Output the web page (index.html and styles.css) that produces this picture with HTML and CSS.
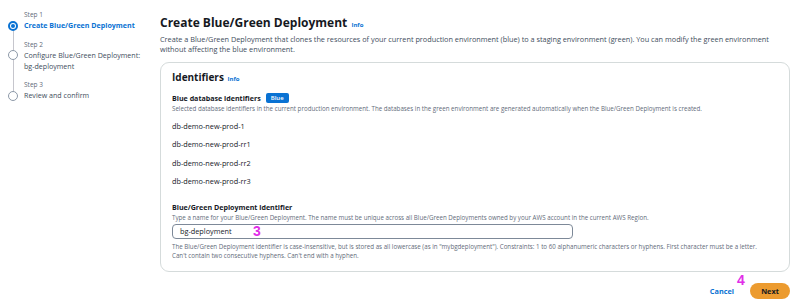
FILE: index.html
```html
<!DOCTYPE html>
<html>
<head>
<meta charset="utf-8">
<link rel="stylesheet" href="styles.css">
</head>
<body>
<div class="page">
  <nav class="steps">
    <div class="step">
      <div class="step-label">Step 1</div>
      <div class="step-row">
        <span class="radio active"></span>
        <span class="step-title current">Create Blue/Green Deployment</span>
      </div>
    </div>
    <div class="step">
      <div class="step-label">Step 2</div>
      <div class="step-row">
        <span class="radio"></span>
        <span class="step-title">Configure Blue/Green Deployment:<br>bg-deployment</span>
      </div>
    </div>
    <div class="step">
      <div class="step-label">Step 3</div>
      <div class="step-row">
        <span class="radio"></span>
        <span class="step-title">Review and confirm</span>
      </div>
    </div>
    <div class="rail"></div>
  </nav>
  <main class="main">
    <h1 class="title">Create Blue/Green Deployment <a class="info">Info</a></h1>
    <p class="lead">Create a Blue/Green Deployment that clones the resources of your current production environment (blue) to a staging environment (green). You can modify the green environment without affecting the blue environment.</p>
    <section class="card">
      <h2 class="card-title">Identifiers <a class="info">Info</a></h2>
      <div class="field-label">Blue database identifiers <span class="badge">Blue</span></div>
      <div class="field-desc">Selected database identifiers in the current production environment. The databases in the green environment are generated automatically when the Blue/Green Deployment is created.</div>
      <ul class="db-list">
        <li>db-demo-new-prod-1</li>
        <li>db-demo-new-prod-rr1</li>
        <li>db-demo-new-prod-rr2</li>
        <li>db-demo-new-prod-rr3</li>
      </ul>
      <div class="field-label spaced">Blue/Green Deployment identifier</div>
      <div class="field-desc">Type a name for your Blue/Green Deployment. The name must be unique across all Blue/Green Deployments owned by your AWS account in the current AWS Region.</div>
      <div class="input-wrap">
        <div class="input">bg-deployment</div>
        <span class="marker m3">3</span>
      </div>
      <div class="field-desc after">The Blue/Green Deployment identifier is case-insensitive, but is stored as all lowercase (as in "mybgdeployment"). Constraints: 1 to 60 alphanumeric characters or hyphens. First character must be a letter.<br>Can't contain two consecutive hyphens. Can't end with a hyphen.</div>
    </section>
    <div class="actions">
      <a class="cancel">Cancel</a>
      <div class="next-wrap">
        <span class="marker m4">4</span>
        <button class="next">Next</button>
      </div>
    </div>
  </main>
</div>
</body>
</html>
```
FILE: styles.css
```css
* { box-sizing: border-box; }
html, body { margin: 0; padding: 0; background: #fff; }
body {
  font-family: "Open Sans", "Noto Sans", sans-serif;
  color: #16191f;
  width: 800px;
  height: 305px;
  overflow: hidden;
}
.page {
  display: flex;
  padding: 0 10px 0 0;
}
.steps {
  width: 160px;
  flex: none;
  position: relative;
  padding: 10px 0 0 8px;
}
.rail {
  position: absolute;
  left: 13px;
  top: 30px;
  width: 1px;
  height: 62px;
  background: #c6c6cd;
}
.step { margin-bottom: 8.5px; }
.step-label {
  font-size: 6.5px;
  color: #5f6b7a;
  padding-left: 16px;
  line-height: 10px;
}
.step-row {
  display: flex;
  align-items: flex-start;
  gap: 6px;
}
.radio {
  flex: none;
  width: 10px;
  height: 10px;
  border-radius: 50%;
  border: 1px solid #8d99a8;
  background: #fff;
  margin-top: 0.5px;
  position: relative;
  z-index: 1;
}
.radio.active {
  border: 2px solid #0972d3;
}
.radio.active::after {
  content: "";
  position: absolute;
  left: 1px; top: 1px;
  width: 4px; height: 4px;
  border-radius: 50%;
  background: #0972d3;
}
.step-title {
  font-size: 7.1px;
  line-height: 11px;
  color: #414d5c;
}
.step-title.current {
  color: #0972d3;
  font-weight: 700;
}
.main {
  flex: 1;
  min-width: 0;
}
.title {
  margin: 15px 0 0;
  font-size: 12px;
  font-weight: 700;
  line-height: 16px;
}
.info {
  font-size: 6px;
  color: #0972d3;
  font-weight: 700;
  margin-left: 1px;
}
.lead {
  margin: 0.5px 0 0;
  font-size: 7.3px;
  line-height: 10px;
  color: #414d5c;
}
.card {
  margin-top: 8.5px;
  border: 1px solid #d5dbdb;
  border-radius: 9px;
  padding: 7px 11px 11.5px;
}
.card-title {
  margin: 0;
  font-size: 10px;
  font-weight: 700;
  line-height: 14px;
}
.field-label {
  margin-top: 6.5px;
  font-size: 7.1px;
  font-weight: 700;
  line-height: 11px;
  display: flex;
  align-items: center;
  gap: 5px;
}
.field-label.spaced { margin-top: 11.3px; }
.badge {
  background: #0972d3;
  color: #fff;
  font-size: 6px;
  padding: 0 5px;
  border-radius: 2px;
  line-height: 10px;
  font-weight: 600;
}
.field-desc {
  font-size: 6.2px;
  line-height: 9.5px;
  color: #5f6b7a;
}
.field-desc.after { margin-top: 2.5px; line-height: 9px; }
.db-list {
  list-style: none;
  margin: 4px 0 0;
  padding: 0;
}
.db-list li {
  font-size: 7.3px;
  line-height: 18.33px;
}
.input-wrap {
  position: relative;
  margin-top: 2px;
}
.input {
  width: 401px;
  height: 15px;
  border: 1px solid #7d8998;
  border-radius: 4px;
  padding-left: 7px;
  font-size: 7.3px;
  line-height: 13px;
}
.marker {
  position: absolute;
  color: #e12ee8;
  font-weight: 700;
  font-family: "Liberation Sans", sans-serif;
  line-height: 16px;
}
.m3 {
  left: 81px;
  top: -1px;
  font-size: 14px;
}
.actions {
  display: flex;
  justify-content: flex-end;
  align-items: center;
  gap: 16px;
  margin-top: 10.5px;
}
.cancel {
  font-size: 7.3px;
  font-weight: 700;
  color: #0972d3;
}
.next-wrap { position: relative; }
.m4 {
  left: -13px;
  top: -11px;
  font-size: 14px;
}
.next {
  display: block;
  background: #ec9b2f;
  border: none;
  border-radius: 9px;
  width: 40px;
  height: 16px;
  font-family: inherit;
  font-size: 7.3px;
  font-weight: 700;
  color: #16191f;
  padding: 0;
}
```
